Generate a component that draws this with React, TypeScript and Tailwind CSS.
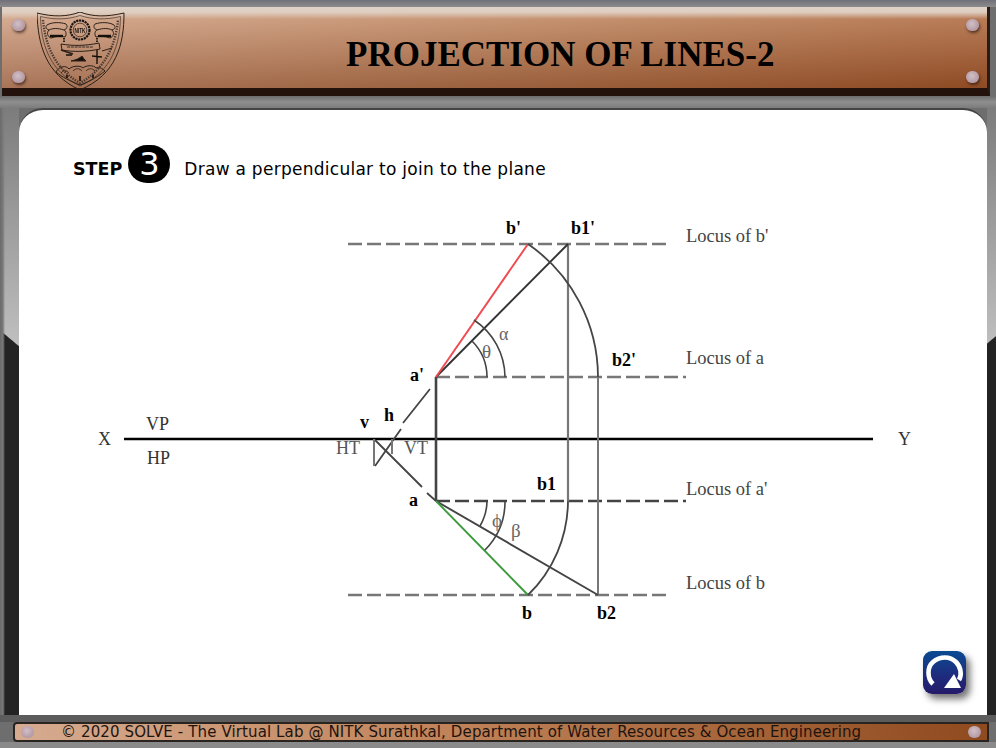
const Rivet = () => (
  <div className="h-[12px] w-[13px] rounded-full bg-[radial-gradient(circle_at_45%_40%,#d2bfc6,#a68a96)] shadow-[1px_2px_3px_rgba(50,25,15,0.7)] blur-[0.4px]" />
);

const Logo = () => (
  <svg width="90" height="80" viewBox="0 0 90 80" fill="none" stroke="#2b2018" strokeWidth="1" className="blur-[0.35px]">
    <path d="M0 1 C16 5 30 5 43 0 C56 5 70 5 87 1 C87 32 80 62 43 78 C8 62 1 32 0 1Z" />
    <path d="M3.5 4.5 C18 8 31 7.5 43 3.5 C55 7.5 69 8 83.5 4.5 C83 31 76 59 43 74 C12 59 4 31 3.5 4.5Z" strokeWidth="0.6" />
    <path d="M6 8 C8 30 16 56 43 71 C70 56 79 30 81 8" strokeWidth="2.4" strokeDasharray="1.4 1.2" stroke="#4a3a30" />
    <circle cx="43" cy="18" r="9.5" strokeWidth="2.2" strokeDasharray="2.2 0.7" stroke="#1a1512" />
    <circle cx="43" cy="18" r="6.8" strokeWidth="0.7" />
    <text x="43" y="20.5" fontSize="7" fontWeight="700" fill="#1a1512" stroke="none" textAnchor="middle" textLength="11" lengthAdjust="spacingAndGlyphs" fontFamily="Liberation Sans, sans-serif">NITK</text>
    <path d="M10 13c5-3 13-3 19-1 2 2 1 5-2 6-6-2-11-2-15 0-3-1-4-3-2-5Z" />
    <path d="M12 18c-3 3-1 7 2 8 5-2 10-2 14-1 2-3 1-6-1-7" />
    <path d="M13 24h13" strokeWidth="2.4" stroke="#15100c" />
    <path d="M58 12c6-2 14-2 19 1 2 2 1 4-2 5-4-2-9-2-15 0-3-1-4-4-2-6Z" />
    <path d="M60 18c-2 1-3 4-1 7 4-1 9-1 14 1 3-1 5-5 2-8" />
    <path d="M61 24h13" strokeWidth="2.4" stroke="#15100c" />
    <path d="M27 26v5M60 26v4" strokeWidth="2" strokeDasharray="1.5 1" />
    <path d="M24 32c12 2 24 2 38-1l1 6c-14 3-27 3-38 1Z" />
    <path d="M30 35h26" strokeWidth="0.9" strokeDasharray="3 0.8" />
    <path d="M24 38l12 4" strokeWidth="1.4" />
    <path d="M34 49c5-1 9-3 11-5l2 3 2 2Z" fill="#15100c" />
    <path d="M29 43h6M60 38v14M55 44l10 1" strokeWidth="1.4" stroke="#15100c" />
    <path d="M65 39l10-3" strokeWidth="1" />
    <path d="M19 60c3-6 10-7 13-3 3-3 11-4 14-1 3-3 11-3 13 0 3-1 6 0 9 3-6 5-14 10-25 14-10-4-18-8-24-13Z" />
    <path d="M24 61c2-3 6-3 8 0M36 59c2-3 7-3 9 0M49 59c2-3 7-3 9 0" strokeWidth="0.8" />
    <path d="M30 66v-3M43 69v-5M56 66v-3" strokeWidth="1.6" stroke="#15100c" />
  </svg>
);

const Dash = ({ x1, x2, y, c = "#777" }: { x1: number; x2: number; y: number; c?: string }) => (
  <line x1={x1} x2={x2} y1={y} y2={y} stroke={c} strokeWidth="2.6" strokeDasharray="14 5" />
);

const L = ({ x, y, t, b = true, c = "#000", s = 18 }: { x: number; y: number; t: string; b?: boolean; c?: string; s?: number }) => (
  <text x={x} y={y} fill={c} fontSize={s} fontWeight={b ? 700 : 400} stroke="none">{t}</text>
);

const Diagram = () => (
  <svg width="968" height="440" viewBox="19 205 968 440" fill="none" className="font-['Liberation_Serif',serif]">
    <Dash x1={348} x2={668} y={243} />
    <Dash x1={436} x2={686} y={376} />
    <Dash x1={436} x2={686} y={500} c="#444" />
    <Dash x1={348} x2={668} y={594} />
    <line x1={124} x2={873} y1={438} y2={438} stroke="#000" strokeWidth="2.6" />
    <line x1={436} x2={436} y1={376} y2={500} stroke="#444" strokeWidth="2.6" />
    <line x1={568} x2={568} y1={243} y2={500} stroke="#777" strokeWidth="2.2" />
    <line x1={598} x2={598} y1={376} y2={594} stroke="#777" strokeWidth="2" />
    <line x1={436} y1={376} x2={568} y2={243} stroke="#333" strokeWidth="1.9" />
    <line x1={436} y1={376} x2={528} y2={243} stroke="#f0494f" strokeWidth="1.9" />
    <line x1={436} y1={500} x2={598} y2={594} stroke="#444" strokeWidth="1.9" />
    <line x1={436} y1={500} x2={528} y2={594} stroke="#3c9a3c" strokeWidth="1.9" />
    <path d="M528 243 A162 162 0 0 1 598 376" stroke="#444" strokeWidth="1.8" />
    <path d="M568 500 A132 132 0 0 1 528 594" stroke="#444" strokeWidth="1.8" />
    <path d="M487 376 A51 51 0 0 0 472 340" stroke="#444" strokeWidth="1.6" />
    <path d="M505 376 A69 69 0 0 0 474 319" stroke="#444" strokeWidth="1.6" />
    <path d="M487 500 A51 51 0 0 1 480 525" stroke="#444" strokeWidth="1.6" />
    <path d="M505 500 A69 69 0 0 1 485 549" stroke="#444" strokeWidth="1.6" />
    <path d="M430 388 L403 422 M401 428 L375 465" stroke="#444" strokeWidth="1.8" />
    <path d="M436 500 L427 492 M422 486 L375 439" stroke="#444" strokeWidth="1.8" />
    <path d="M374 438 V465 M392 438 V453" stroke="#777" strokeWidth="2" />
    <L x={506} y={233} t="b'" />
    <L x={571} y={233} t="b1'" />
    <L x={612} y={365} t="b2'" />
    <L x={410} y={380} t="a'" />
    <L x={360} y={427} t="v" />
    <L x={384} y={420} t="h" />
    <L x={409} y={505} t="a" />
    <L x={537} y={489} t="b1" />
    <L x={522} y={618} t="b" />
    <L x={597} y={618} t="b2" />
    <L x={686} y={241} t="Locus of b'" b={false} c="#444" s={18.5} />
    <L x={686} y={363} t="Locus of a" b={false} c="#444" s={18.5} />
    <L x={686} y={494} t="Locus of a'" b={false} c="#444" s={18.5} />
    <L x={686} y={588} t="Locus of b" b={false} c="#444" s={18.5} />
    <L x={98} y={444} t="X" b={false} c="#333" />
    <L x={898} y={444} t="Y" b={false} c="#333" />
    <L x={146} y={429} t="VP" b={false} c="#333" />
    <L x={147} y={463} t="HP" b={false} c="#333" />
    <L x={336} y={453} t="HT" b={false} c="#555" />
    <L x={404} y={453} t="VT" b={false} c="#555" />
    <L x={499} y={339} t="α" b={false} c="#666" />
    <L x={482} y={357} t="θ" b={false} c="#666" s={19} />
    <L x={492} y={526} t="ϕ" b={false} c="#666" s={19} />
    <L x={511} y={536} t="β" b={false} c="#666" s={19} />
  </svg>
);

const Restart = () => (
  <div className="h-[43px] w-[43px] rounded-[9px] bg-[linear-gradient(180deg,#0b4a92,#1f2a7c_60%,#241a68)] shadow-[4px_5px_7px_rgba(0,0,0,0.55)]">
    <svg width="43" height="43" viewBox="0 0 43 43" fill="none">
      <path d="M10 33 C4 27 4 16 10 11 C17 5 27 5 33 11 C38 16 39 24 36 29" stroke="#fff" strokeWidth="4.6" />
      <path d="M21 37 L38 37 L31 23Z" fill="#fff" />
    </svg>
  </div>
);

export default function App() {
  return (
    <div className="flex h-[748px] w-[996px] flex-col overflow-hidden bg-[#6e6e6e] font-['DejaVu_Sans',sans-serif]">
      <div className="h-[7px] shrink-0 bg-[linear-gradient(180deg,#70707a,#8c8c8c)]" />
      <header className="ml-[2px] mr-[6px] h-[89px] shrink-0 border-b-[8px] border-b-[#22120b] border-r-[3px] border-r-[#2a1c14] bg-[linear-gradient(180deg,#e0d2c8_0,#dfcfc2_5px,transparent_12px),linear-gradient(180deg,rgba(255,255,255,0.22),rgba(70,20,0,0.3)),linear-gradient(90deg,#d29e7e,#c08258_50%,#ad6233)]">
        <div className="flex h-full items-center">
          <div className="ml-[10px] flex h-full flex-col justify-between pb-[5px] pt-[12px]">
            <Rivet />
            <Rivet />
          </div>
          <div className="ml-[12px] shrink-0 self-start pt-[5px]">
            <Logo />
          </div>
          <h1 className="ml-[219px] pt-[14px] font-['Liberation_Serif',serif] text-[35px] font-bold leading-none whitespace-nowrap text-black">
            PROJECTION OF LINES-2
          </h1>
          <div className="ml-auto mr-[8px] flex h-full flex-col justify-between pb-[5px] pt-[12px]">
            <Rivet />
            <Rivet />
          </div>
        </div>
      </header>
      <div className="h-[12px] shrink-0 bg-[linear-gradient(180deg,#6d6d6d,#8f8f8f_50%,#7c7c7c)]" />
      <div className="flex h-[607px] shrink-0">
        <div className="w-[19px] shrink-0 bg-[linear-gradient(90deg,#6a6a6a_0,#7a7a7a_3px,transparent_5px),linear-gradient(220deg,transparent_182px,#232323_183px),linear-gradient(180deg,#7c7c7c,#bdbdbd_38%)]" />
        <main className="flex w-[968px] shrink-0 flex-col rounded-t-[24px] border-t-2 border-t-[#444] bg-white">
          <div className="mt-[35px] flex h-[38px] items-center pl-[54px]">
            <span className="pt-[11px] text-[17.5px] font-bold leading-none text-black">STEP</span>
            <span className="ml-[6px] flex h-[38px] w-[42px] items-center justify-center rounded-full bg-black text-[32px] leading-none text-white">3</span>
            <span className="ml-[14px] pt-[10px] text-[17px] leading-none tracking-[0.27px] text-black">Draw a perpendicular to join to the plane</span>
          </div>
          <div className="mt-[23px]">
            <Diagram />
          </div>
          <div className="mt-[5px] flex justify-end pr-[21px]">
            <Restart />
          </div>
        </main>
        <div className="w-[9px] shrink-0 bg-[linear-gradient(140deg,transparent_180px,#232323_181px),linear-gradient(180deg,#7c7c7c,#bdbdbd_38%)]" />
      </div>
      <div className="h-[7px] shrink-0 bg-[#5c5c5c]" />
      <footer className="ml-[13px] mr-[7px] flex h-[20px] shrink-0 items-center rounded-l-[4px] border-2 border-[#2a2420] bg-[linear-gradient(90deg,#d6ab90,#c08258_45%,#8f4a1e)]">
        <div className="ml-[6px]"><div className="h-[12px] w-[13px] rounded-full bg-[radial-gradient(circle_at_45%_40%,#d2bfc6,#a68a96)] blur-[0.4px]" /></div>
        <span className="ml-[27px] whitespace-nowrap text-[15px] leading-none tracking-[0.12px] text-[#1d1410]">© 2020 SOLVE - The Virtual Lab @ NITK Surathkal, Department of Water Resources &amp; Ocean Engineering</span>
        <div className="ml-auto mr-[6px]"><div className="h-[12px] w-[13px] rounded-full bg-[radial-gradient(circle_at_45%_40%,#d2bfc6,#a68a96)] blur-[0.4px]" /></div>
      </footer>
      <div className="flex-1 bg-[#8a8a8a]" />
    </div>
  );
}
